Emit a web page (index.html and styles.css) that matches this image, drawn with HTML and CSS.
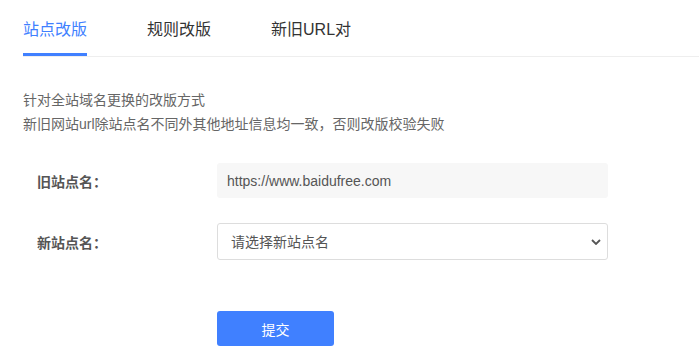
FILE: index.html
```html
<!DOCTYPE html>
<html lang="zh-CN">
<head>
    <meta charset="UTF-8">
    <meta name="viewport" content="width=device-width, initial-scale=1.0">
    <title>站点改版</title>
    <link rel="stylesheet" href="styles.css">
</head>
<body>
    <div class="page">
        <div class="tabs">
            <div class="tab active">站点改版</div>
            <div class="tab">规则改版</div>
            <div class="tab">新旧URL对</div>
        </div>

        <div class="desc">
            <p>针对全站域名更换的改版方式</p>
            <p>新旧网站url除站点名不同外其他地址信息均一致，否则改版校验失败</p>
        </div>

        <div class="form">
            <div class="form-row">
                <label class="form-label">旧站点名：</label>
                <input class="old-site" type="text" value="https://www.baidufree.com" readonly>
            </div>
            <div class="form-row">
                <label class="form-label">新站点名：</label>
                <div class="select-wrap">
                    <select class="new-site">
                        <option>请选择新站点名</option>
                    </select>
                    <svg class="arrow" width="10" height="6" viewBox="0 0 10 6">
                        <path d="M1 1 L5 5 L9 1" fill="none" stroke="#555" stroke-width="1.8"/>
                    </svg>
                </div>
            </div>
            <div class="form-row btn-row">
                <button class="submit">提交</button>
            </div>
        </div>
    </div>
</body>
</html>
```

FILE: styles.css
```css
body {
    margin: 0;
    background: #fff;
    font-family: "Liberation Sans", "Noto Sans CJK SC", sans-serif;
}
.page {
    padding-left: 23px;
}
.tabs {
    display: flex;
    gap: 60px;
    padding-top: 18px;
    border-bottom: 1px solid #eeeeee;
}
.tab {
    font-size: 16px;
    line-height: 24px;
    color: #333;
    padding-bottom: 11px;
    border-bottom: 3px solid transparent;
}
.tab.active {
    color: #4080ff;
    border-bottom-color: #4080ff;
}
.desc {
    margin-top: 31px;
}
.desc p {
    margin: 0;
    font-size: 14px;
    line-height: 24px;
    color: #666;
}
.form {
    margin-top: 27px;
    padding-left: 14px;
}
.form-row {
    display: flex;
    align-items: center;
    margin-bottom: 25px;
}
.form-label {
    width: 180px;
    font-size: 14px;
    font-weight: bold;
    color: #555;
}
.old-site {
    box-sizing: border-box;
    width: 391px;
    height: 35px;
    border: none;
    border-radius: 3px;
    background: #f7f7f7;
    padding: 0 10px;
    font-family: inherit;
    font-size: 14px;
    color: #555;
    outline: none;
}
.select-wrap {
    position: relative;
    width: 391px;
}
.new-site {
    box-sizing: border-box;
    width: 100%;
    height: 37px;
    border: 1px solid #dddddd;
    border-radius: 3px;
    background: #fff;
    padding: 0 13px;
    font-family: inherit;
    font-size: 14px;
    color: #555;
    appearance: none;
    -webkit-appearance: none;
}
.arrow {
    position: absolute;
    right: 7px;
    top: 16px;
}
.btn-row {
    margin-top: 51px;
    padding-left: 180px;
}
.submit {
    width: 117px;
    height: 35px;
    border: none;
    border-radius: 3px;
    background: #4080ff;
    color: #fff;
    font-family: inherit;
    font-size: 14px;
}
```
